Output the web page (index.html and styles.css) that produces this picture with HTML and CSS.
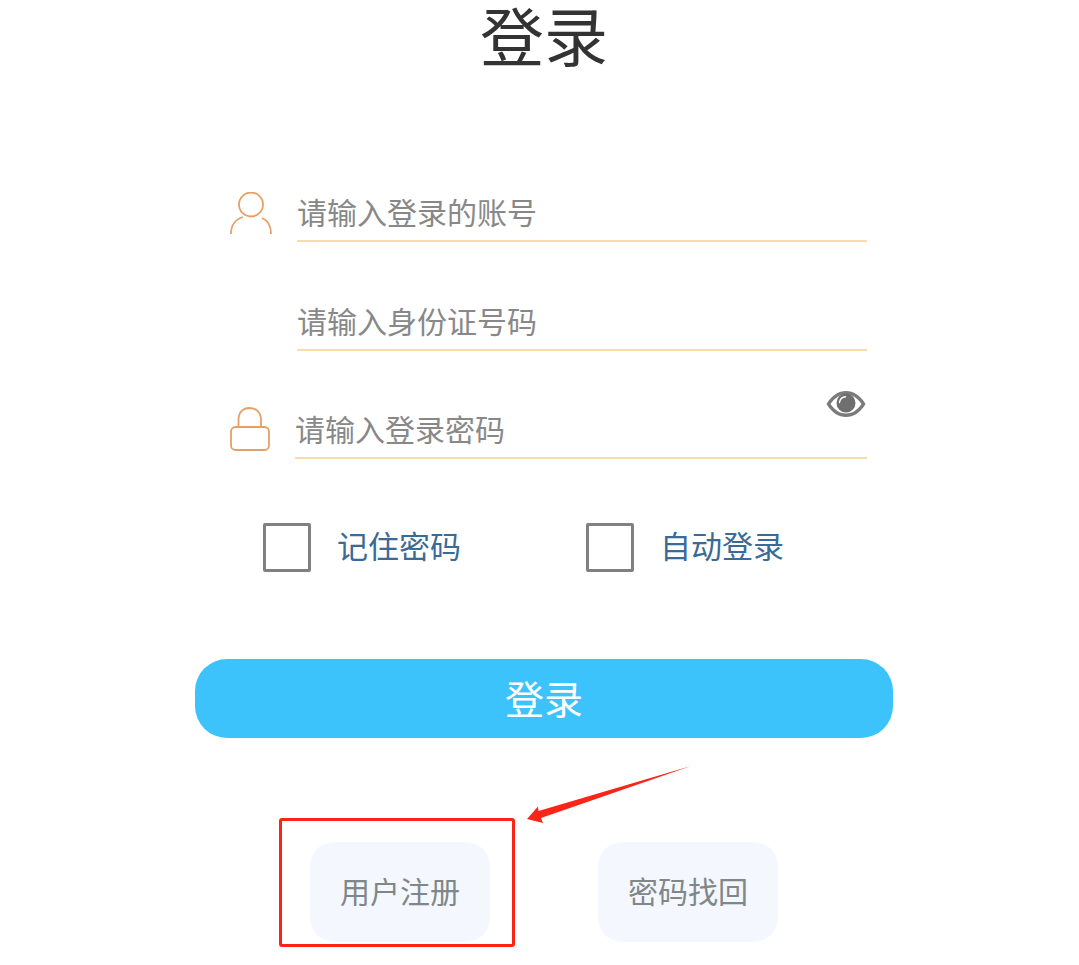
FILE: index.html
```html
<!DOCTYPE html>
<html lang="zh-CN">
<head>
  <meta charset="UTF-8" />
  <meta name="viewport" content="width=device-width, initial-scale=1.0" />
  <title>登录</title>
  <link rel="stylesheet" href="styles.css">
</head>
<body>
  <div class="page">
    <h1 class="title">登录</h1>

    <div class="form">
      <div class="row">
        <svg class="icon" width="42" height="44" viewBox="0 0 42 44" fill="none" stroke="#e79f66" stroke-width="1.8">
          <circle cx="21" cy="12.500" r="12" />
          <path d="M1 42C1 33 6 27 13 25M41 42C41 33 37 28 32 26" />
        </svg>
        <div class="field">请输入登录的账号</div>
      </div>

      <div class="row">
        <div class="icon icon-empty"></div>
        <div class="field">请输入身份证号码</div>
      </div>

      <div class="row row-pwd">
        <svg class="icon" width="40" height="44" viewBox="0 0 40 44" fill="none" stroke="#e79f66" stroke-width="1.8">
          <rect x="1" y="20" width="38" height="23" rx="4.500" />
          <path d="M8.500 20V12.500C8.500 5.500 13 1 19.500 1S31 5.500 31 12.500V20" />
        </svg>
        <div class="field">
          请输入登录密码
          <svg class="eye" width="40" height="28" viewBox="0 0 40 28">
            <path d="M0.500 14C6 5 12.500 1 20 1S34 5 39.500 14C34 23 27.500 27 20 27S6 23 0.500 14Z" fill="#7b7b7b" />
            <path d="M4.500 14C9 7.500 14 4.500 20 4.500S31 7.500 35.500 14C31 20.500 26 23.500 20 23.500S9 20.500 4.500 14Z" fill="#fff" />
            <circle cx="20" cy="13" r="9.500" fill="#6f6f6f" />
            <path d="M13.500 12.500C14 9 16.500 7 19.500 6.800" fill="none" stroke="#fff" stroke-width="1.400" stroke-linecap="round" />
          </svg>
        </div>
      </div>
    </div>

    <div class="options">
      <label class="option">
        <span class="box"></span>
        <span class="option-text">记住密码</span>
      </label>
      <label class="option">
        <span class="box"></span>
        <span class="option-text">自动登录</span>
      </label>
    </div>

    <button class="login-btn">登录</button>

    <div class="links">
      <div class="link-btn">用户注册</div>
      <div class="link-btn">密码找回</div>
    </div>
  </div>

  <!-- red marks on top of the screenshot -->
  <div class="mark-box"></div>
  <svg class="mark-arrow" width="170" height="62" viewBox="0 0 170 62">
    <polygon points="165,1 12.500,46 12,41.500 1,54 17,58 15,53" fill="#fa2419" />
  </svg>
</body>
</html>
```

FILE: styles.css
```css
html, body {
  margin: 0;
  padding: 0;
  background-color: #fff;
}
body {
  position: relative;
  height: 965px;
  overflow: hidden;
  font-family: "Noto Sans CJK SC", "Noto Sans", sans-serif;
}
.page {
  width: 698px;
  margin-left: 195px;
}
.title {
  margin: 0;
  height: 76px;
  line-height: 66px;
  font-size: 64px;
  font-weight: 400;
  color: #333;
  text-align: center;
}
.form {
  margin-top: 116px;
  display: flex;
  flex-direction: column;
  gap: 59px;
}
.row {
  display: flex;
  align-items: flex-start;
  gap: 25px;
  width: 637px;
  padding-left: 35px;
}
.icon {
  flex: none;
  display: block;
}
.icon-empty {
  width: 42px;
  height: 44px;
}
.field {
  position: relative;
  flex: 1;
  height: 36px;
  margin-top: 1px;
  padding-bottom: 11px;
  line-height: 36px;
  font-size: 30px;
  color: #888;
  border-bottom: 2px solid #f8dcb0;
}
.row-pwd .icon {
  margin-top: -3px;
}
.row-pwd .field {
  margin-top: 0;
}
.eye {
  position: absolute;
  right: 1px;
  top: -20px;
}
.options {
  display: flex;
  margin-top: 64px;
  padding-left: 68px;
}
.option {
  flex: none;
  display: flex;
  align-items: center;
  gap: 26px;
  width: 323px;
  font-size: 31px;
  color: #3a6a96;
}
.option-text {
  margin-top: -7px;
}
.box {
  display: block;
  width: 42px;
  height: 43px;
  border: 3px solid #808080;
  border-radius: 2px;
}
.login-btn {
  display: block;
  width: 100%;
  height: 79px;
  margin-top: 87px;
  padding: 0 0 4px;
  border: none;
  border-radius: 32px;
  background-color: #3cc3fc;
  color: #fff;
  font-family: inherit;
  font-size: 39px;
}
.links {
  display: flex;
  gap: 108px;
  margin-top: 104px;
  padding-left: 115px;
}
.link-btn {
  width: 180px;
  height: 100px;
  line-height: 97px;
  border-radius: 24px;
  background-color: #f4f8fe;
  color: #808789;
  font-size: 30px;
  text-align: center;
}
.mark-box {
  position: absolute;
  left: 279px;
  top: 818px;
  width: 230px;
  height: 123px;
  border: 3px solid #fa2419;
  border-radius: 3px;
}
.mark-arrow {
  position: absolute;
  left: 526px;
  top: 765px;
}
```
